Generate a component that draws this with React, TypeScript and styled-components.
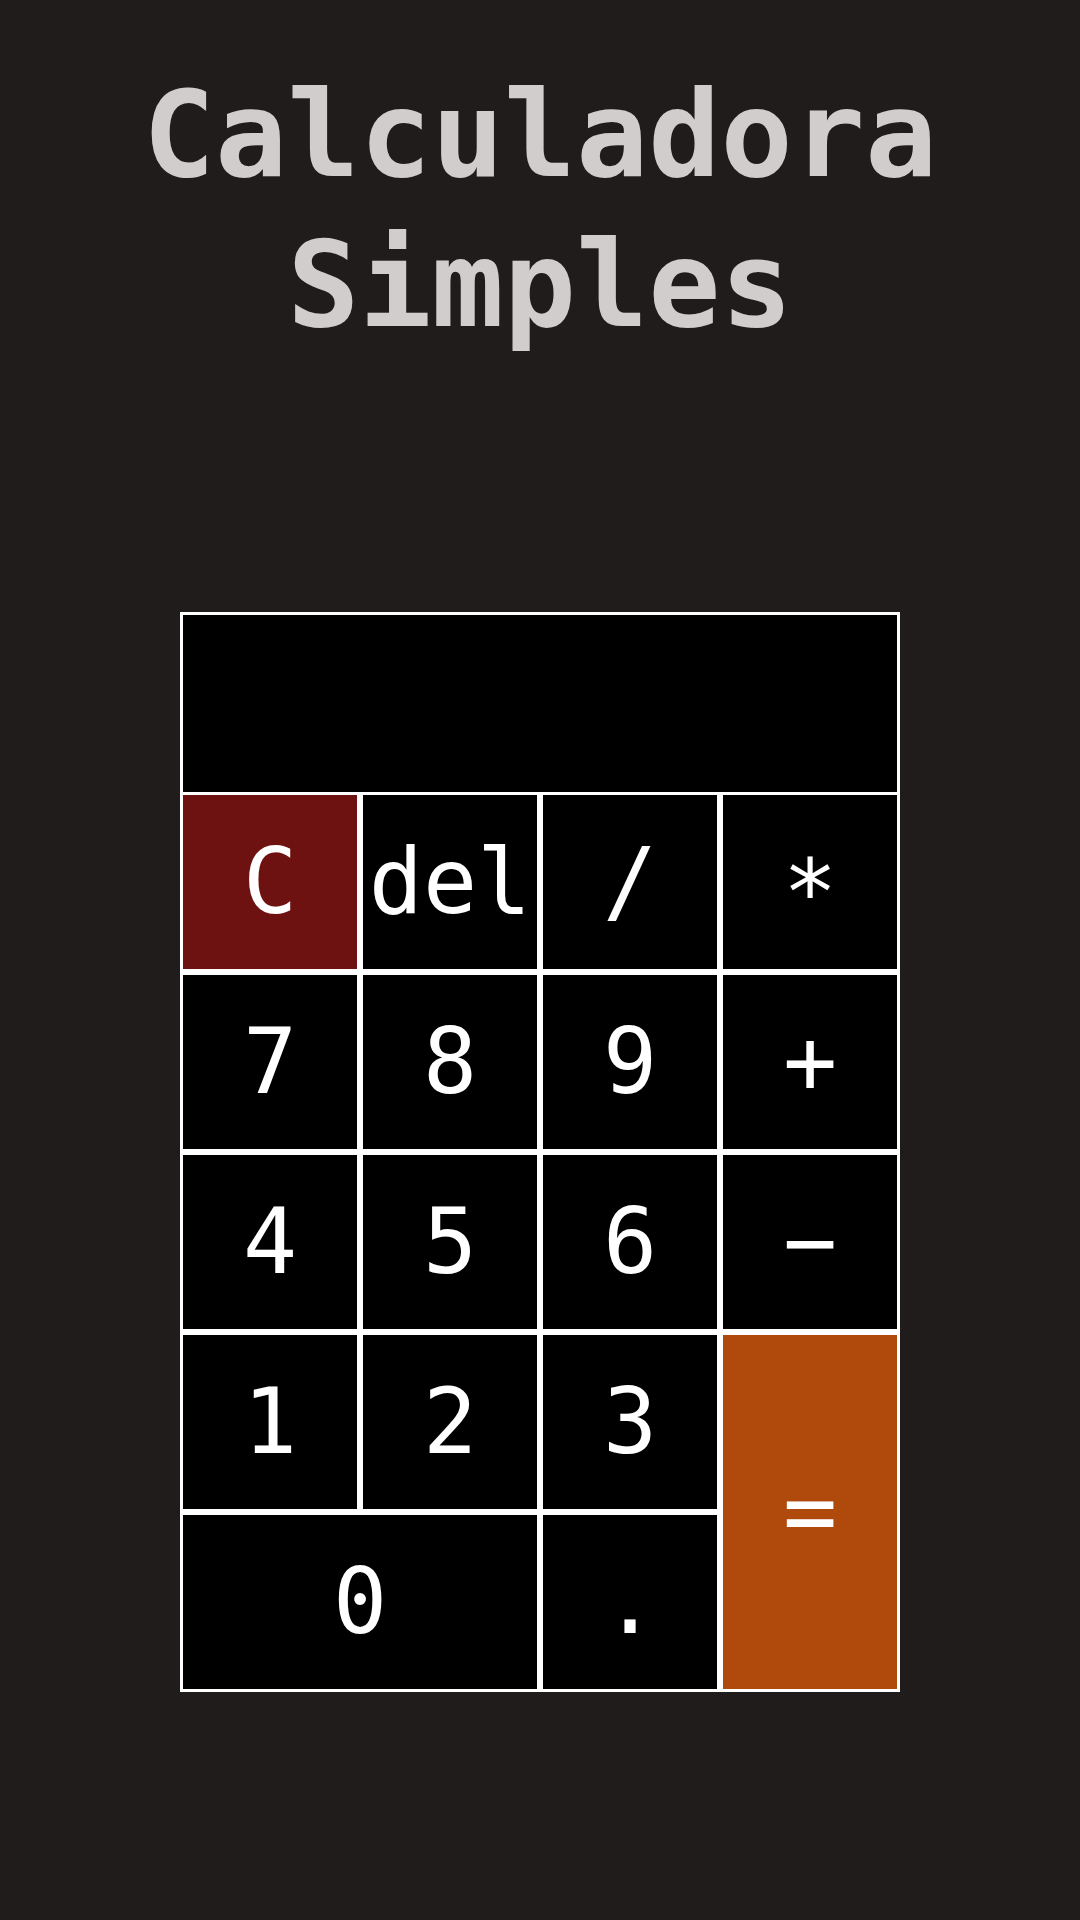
import React from "react";
import styled, { createGlobalStyle } from "styled-components";

const Global = createGlobalStyle`
  html, body {
    margin: 0;
    padding: 0;
    background: #201c1b;
  }
  * { box-sizing: border-box; }
`;

const Page = styled.main`
  min-height: 1920px;
  background: #201c1b;
  padding-top: 60px;
  display: flex;
  flex-direction: column;
  align-items: center;
`;

const Title = styled.h1`
  margin: 0;
  font-family: "DejaVu Sans Mono", "Liberation Mono", monospace;
  font-weight: bold;
  font-size: 120px;
  line-height: 150px;
  color: #d1cdcc;
  text-align: center;
  width: 1080px;
`;

const Calculator = styled.section`
  margin-top: 252px;
  width: 720px;
  display: flex;
  flex-direction: column;
`;

const Display = styled.div`
  height: 180px;
  background: #000;
  border: 3px solid #fff;
  border-bottom: none;
  color: #fff;
  font-family: "DejaVu Sans Mono", monospace;
  font-size: 90px;
  display: flex;
  align-items: center;
  justify-content: flex-end;
  padding: 0 20px;
`;

const Keys = styled.div`
  display: grid;
  grid-template-columns: repeat(4, 180px);
  grid-auto-rows: 180px;
`;

type Tone = "plain" | "clear" | "equals";

const Key = styled.button<{ $tone?: Tone; $cols?: number; $rows?: number; $drop?: number }>`
  margin: 0;
  padding: ${(p) => (p.$drop ?? 0)}px 0 0 0;
  border: 3px solid #fff;
  border-radius: 0;
  background: ${(p) =>
    p.$tone === "clear" ? "#6e1211" : p.$tone === "equals" ? "#b0490c" : "#000"};
  color: #fff;
  font-family: "DejaVu Sans Mono", "Liberation Mono", monospace;
  font-size: 90px;
  line-height: 1;
  display: flex;
  align-items: center;
  justify-content: center;
  grid-column: span ${(p) => p.$cols ?? 1};
  grid-row: span ${(p) => p.$rows ?? 1};
  cursor: pointer;
`;

const keys: { label: string; tone?: Tone; cols?: number; rows?: number; drop?: number }[] = [
  { label: "C", tone: "clear" },
  { label: "del" },
  { label: "/" },
  { label: "*", drop: 22 },
  { label: "7" },
  { label: "8" },
  { label: "9" },
  { label: "+" },
  { label: "4" },
  { label: "5" },
  { label: "6" },
  { label: "−" },
  { label: "1" },
  { label: "2" },
  { label: "3" },
  { label: "=", tone: "equals", rows: 2 },
  { label: "0", cols: 2 },
  { label: "." },
];

export default function App() {
  return (
    <>
      <Global />
      <Page>
        <Title>
          Calculadora
          <br />
          Simples
        </Title>
        <Calculator>
          <Display />
          <Keys>
            {keys.map((k) => (
              <Key key={k.label} $tone={k.tone} $cols={k.cols} $rows={k.rows} $drop={k.drop}>
                {k.label}
              </Key>
            ))}
          </Keys>
        </Calculator>
      </Page>
    </>
  );
}
